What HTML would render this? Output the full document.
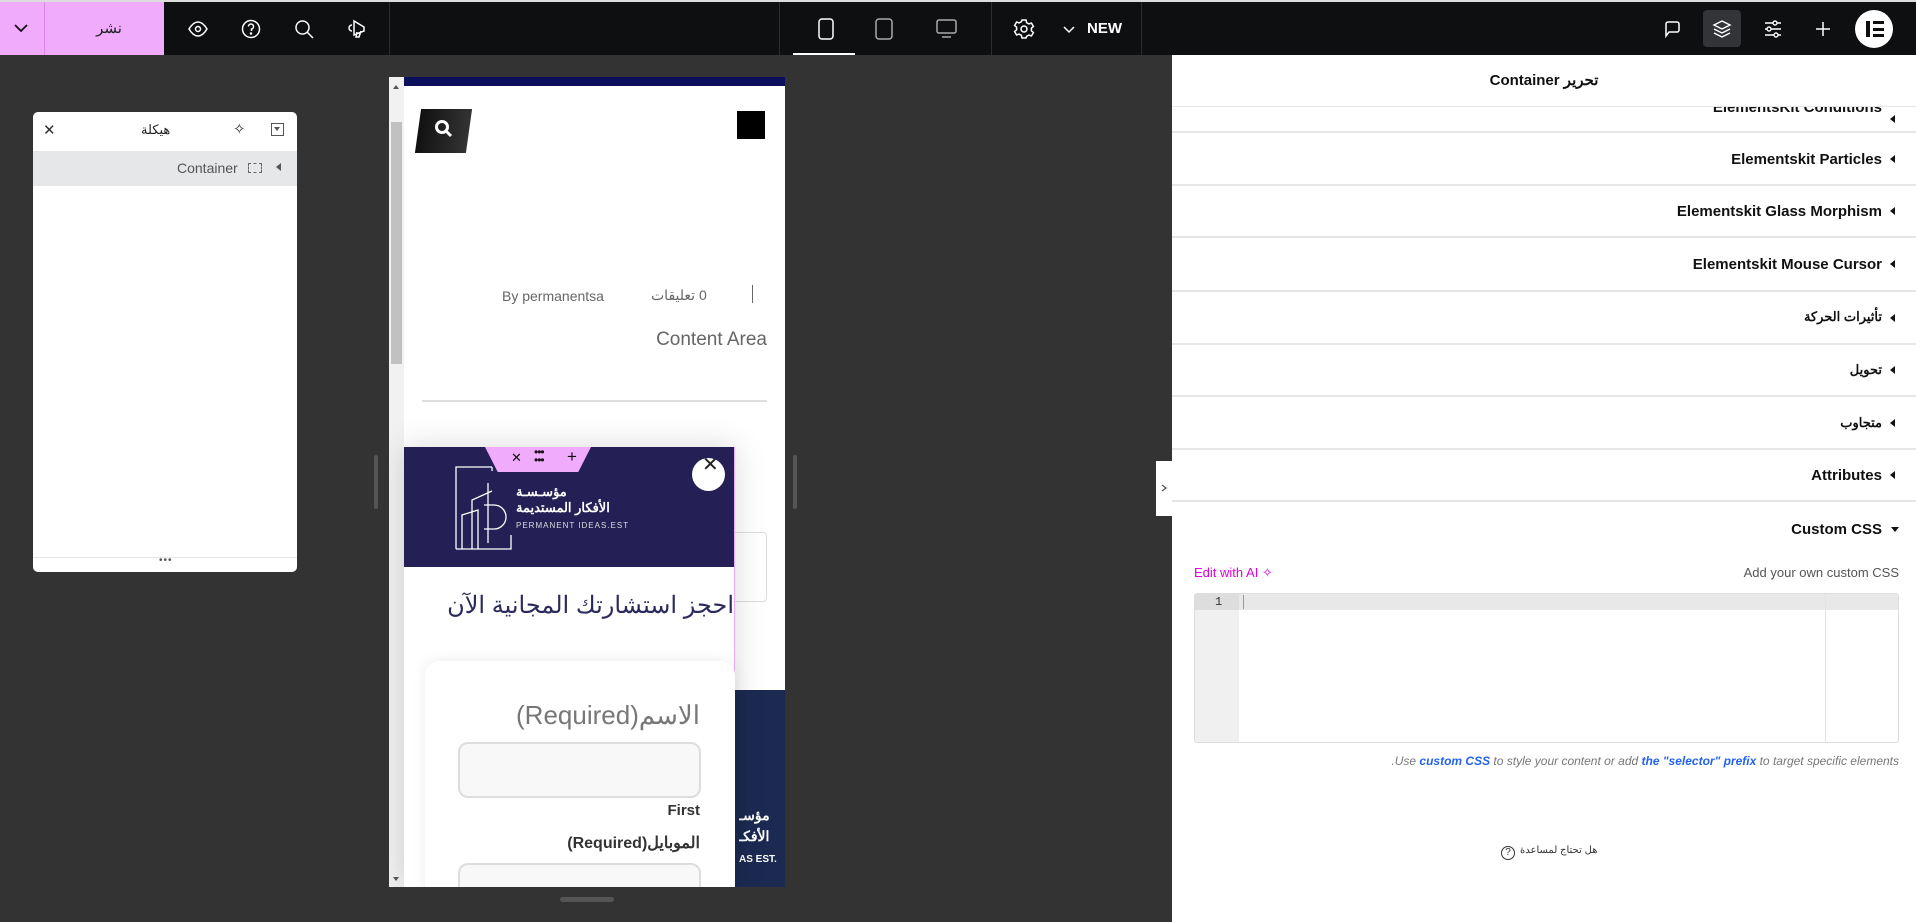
<!DOCTYPE html>
<html><head><meta charset="utf-8"><style>
*{box-sizing:border-box;margin:0;padding:0}
body{width:1916px;height:922px;overflow:hidden;background:#333;font-family:"Liberation Sans","Noto Sans CJK SC",sans-serif;position:relative}
.a{position:absolute}
.top{left:0;top:0;width:1916px;height:55px;background:#0e0f11;border-top:2px solid #ddd}
.sep{position:absolute;top:0;width:1px;height:53px;background:#2b2c30}
svg{display:block}
.row{position:absolute;left:1172px;width:744px;border-bottom:2px solid #e6e6e6;font-weight:bold;font-size:15px;color:#111;text-align:right;padding-right:34px}
.row:after{content:"";position:absolute;right:21px;top:50%;margin-top:-4px;border:4px solid transparent;border-right:5px solid #111;border-left:0}
</style></head><body>
<div class="a top">
 <div class="a" style="left:0;top:0;width:164px;height:53px;background:#f0abfc"></div>
 <div class="a" style="left:44px;top:0;width:1px;height:53px;background:#d88ae6"></div>
 <svg class="a" style="left:13px;top:20px" width="16" height="12"><path d="M2 3l6 6 6-6" stroke="#111" stroke-width="1.8" fill="none"/></svg>
 <div class="a" dir="rtl" style="left:84px;top:17px;width:50px;text-align:center;font-size:15px;color:#222">نشر</div>
 <svg class="a" style="left:187px;top:16px" width="22" height="22" fill="none" stroke="#fff" stroke-width="1.5"><path d="M2 11c3-5 6-7 9-7s6 2 9 7c-3 5-6 7-9 7s-6-2-9-7z"/><circle cx="11" cy="11" r="2.5"/></svg>
 <svg class="a" style="left:240px;top:16px" width="22" height="22" fill="none" stroke="#fff" stroke-width="1.5"><circle cx="11" cy="11" r="8.5"/><path d="M8.5 8.5a2.5 2.5 0 1 1 3 2.5v2"/><circle cx="11" cy="15.5" r=".5" fill="#fff"/></svg>
 <svg class="a" style="left:293px;top:16px" width="22" height="22" fill="none" stroke="#fff" stroke-width="1.5"><circle cx="9.5" cy="9.5" r="6.5"/><path d="M14 14l6 6"/></svg>
 <svg class="a" style="left:346px;top:16px" width="22" height="22" fill="none" stroke="#fff" stroke-width="1.5"><path d="M18 9L8 3v14l10-4zM18 9v4M15 13l-2 6h-3l1-5M6 7a3 3 0 0 0 0 6"/></svg>
 <div class="sep" style="left:389px"></div>
 <div class="sep" style="left:779px"></div>
 <svg class="a" style="left:816px;top:15px" width="20" height="24" fill="none" stroke="#fff" stroke-width="1.5"><rect x="3" y="2" width="14" height="20" rx="3"/></svg>
 <div class="a" style="left:793px;top:51px;width:62px;height:2px;background:#fff"></div>
 <svg class="a" style="left:874px;top:15px" width="22" height="24" fill="none" stroke="#aaa" stroke-width="1.5"><rect x="2" y="2" width="16" height="20" rx="3"/></svg>
 <svg class="a" style="left:935px;top:16px" width="24" height="22" fill="none" stroke="#aaa" stroke-width="1.5"><rect x="2" y="2" width="19" height="13" rx="2"/><path d="M7 19h9"/></svg>
 <div class="sep" style="left:991px"></div>
 <svg class="a" style="left:1013px;top:16px" width="22" height="22" fill="none" stroke="#fff" stroke-width="1.5"><circle cx="11" cy="11" r="3"/><path d="M9 2h4l.6 2.6 2.3 1.3 2.5-.9 2 3.5-2 1.7v2.6l2 1.7-2 3.5-2.5-.9-2.3 1.3L13 20H9l-.6-2.6-2.3-1.3-2.5.9-2-3.5 2-1.7V9.2l-2-1.7 2-3.5 2.5.9 2.3-1.3z"/></svg>
 <svg class="a" style="left:1062px;top:22px" width="14" height="10"><path d="M2 3l5 5 5-5" stroke="#fff" stroke-width="1.5" fill="none"/></svg>
 <div class="a" style="left:1087px;top:18px;font-weight:bold;font-size:15px;color:#fff">NEW</div>
 <div class="sep" style="left:1141px"></div>
 <svg class="a" style="left:1662px;top:17px" width="20" height="20" fill="none" stroke="#fff" stroke-width="1.5"><path d="M4 17V5a2 2 0 0 1 2-2h9a2 2 0 0 1 2 2v6a2 2 0 0 1-2 2H7z"/></svg>
 <div class="a" style="left:1703px;top:8px;width:38px;height:37px;border-radius:4px;background:#333438"></div>
 <svg class="a" style="left:1712px;top:17px" width="20" height="20" fill="none" stroke="#fff" stroke-width="1.4"><path d="M10 2l8 4-8 4-8-4zM2 10l8 4 8-4M2 14l8 4 8-4"/></svg>
 <svg class="a" style="left:1763px;top:17px" width="20" height="20" fill="none" stroke="#fff" stroke-width="1.4"><path d="M2 4h16M2 10h16M2 16h16"/><circle cx="12" cy="4" r="2" fill="#0e0f11"/><circle cx="6" cy="10" r="2" fill="#0e0f11"/><circle cx="13" cy="16" r="2" fill="#0e0f11"/></svg>
 <svg class="a" style="left:1813px;top:17px" width="20" height="20" stroke="#fff" stroke-width="1.5"><path d="M10 3v14M3 10h14"/></svg>
 <div class="a" style="left:1855px;top:8px;width:38px;height:38px;border-radius:50%;background:#fff"></div>
 <div class="a" style="left:1866px;top:19px;width:4px;height:16px;background:#0e0f11"></div>
 <div class="a" style="left:1873px;top:19px;width:11px;height:3px;background:#0e0f11"></div>
 <div class="a" style="left:1873px;top:25.5px;width:11px;height:3px;background:#0e0f11"></div>
 <div class="a" style="left:1873px;top:32px;width:11px;height:3px;background:#0e0f11"></div>
</div>

<!-- navigator -->
<div class="a" style="left:33px;top:112px;width:264px;height:460px;background:#fff;border-radius:5px;overflow:hidden">
 <div class="a" style="left:10px;top:9px;font-size:15px;color:#333">✕</div>
 <div class="a" dir="rtl" style="left:108px;top:10px;font-size:13px;color:#222">هيكلة</div>
 <div class="a" style="left:200px;top:8px;font-size:15px;color:#333">✧</div>
 <div class="a" style="left:238px;top:11px;width:13px;height:13px;border:1px solid #555"></div>
 <div class="a" style="left:241px;top:15px;border:3.5px solid transparent;border-top:4px solid #555"></div>
 <div class="a" style="left:0;top:39px;width:264px;height:35px;background:#e6e7e9"></div>
 <div class="a" style="left:144px;top:48px;font-size:14px;color:#555">Container</div>
 <div class="a" style="left:215px;top:51px;width:14px;height:10px;border:1px dashed #666"></div>
 <div class="a" style="left:243px;top:51px;border:4px solid transparent;border-right:5px solid #555;border-left:0"></div>
 <div class="a" style="left:0;top:445px;width:264px;height:1px;background:#e6e6e6"></div>
 <div class="a" style="left:126px;top:443px;font-size:10px;color:#555;letter-spacing:1px">•••</div>
</div>

<!-- preview -->
<div class="a" style="left:389px;top:77px;width:396px;height:810px;background:#fff;overflow:hidden">
 <div class="a" style="left:0;top:0;width:15px;height:810px;background:#f1f1f1"></div>
 <div class="a" style="left:2px;top:45px;width:11px;height:242px;background:#c1c1c1"></div>
 <div class="a" style="left:4px;top:5px;border:3px solid transparent;border-bottom:4px solid #555"></div>
 <div class="a" style="left:4px;top:800px;border:3px solid transparent;border-top:4px solid #555"></div>
 <div class="a" style="left:15px;top:0;width:381px;height:9px;background:#0b0f5c"></div>
 <div class="a" style="left:29px;top:32px;width:51px;height:44px;background:linear-gradient(90deg,#111,#333);transform:skewX(-8deg)"></div>
 <svg class="a" style="left:44px;top:41px" width="22" height="22" fill="none" stroke="#fff" stroke-width="3"><circle cx="9" cy="9" r="5.5"/><path d="M13 13l5 5"/></svg>
 <div class="a" style="left:348px;top:34px;width:28px;height:28px;background:#000"></div>
 <div class="a" style="left:113px;top:211px;font-size:14px;color:#666">By permanentsa</div>
 <div class="a" dir="rtl" style="left:262px;top:210px;font-size:14px;color:#666">0 تعليقات</div>
 <div class="a" style="left:363px;top:208px;width:1px;height:18px;background:#666"></div>
 <div class="a" style="right:18px;top:252px;font-size:19px;color:#666">Content Area</div>
 <div class="a" style="left:33px;top:323px;width:345px;height:2px;background:#ddd"></div>
 <div class="a" style="left:330px;top:455px;width:48px;height:70px;border:1px solid #ddd;border-radius:4px"></div>
 <div class="a" style="left:346px;top:613px;width:50px;height:197px;background:#1c2a52"></div>
 <div class="a" dir="rtl" style="left:350px;top:728px;width:44px;text-align:left;font-size:14px;font-weight:bold;color:#fff;line-height:21px;white-space:nowrap;overflow:hidden">مؤسـ<br>الأفكـ<br><span style="font-size:10px" dir="ltr">AS EST.</span></div>
 <!-- popup -->
 <div class="a" style="left:15px;top:370px;width:331px;height:440px;background:#fff;border-right:1px solid #f0abfc;box-shadow:0 0 30px rgba(0,0,0,.15)">
  <div class="a" style="left:0;top:0;width:330px;height:120px;background:#241f55"></div>
  <svg class="a" style="left:50px;top:18px" width="60" height="85" fill="none" stroke="#fff" stroke-width="1.3"><path d="M2 84V2h36M2 84h55v-14M34 18v60M38 2v4M18 84V35l20-9M8 84V50l16-5v39M30 40h10a12 12 0 0 1 0 24H30"/></svg>
  <div class="a" dir="rtl" style="left:112px;top:37px;width:100px;font-size:13px;font-weight:bold;color:#fff;text-align:left;line-height:16px;white-space:nowrap">مؤسـسـة<br>الأفكار المستديمة</div>
  <div class="a" style="left:112px;top:74px;font-size:8px;color:#ddd;letter-spacing:1px">PERMANENT IDEAS.EST</div>
  <div class="a" style="left:81px;top:0;width:106px;height:25px;background:#f0abfc;clip-path:polygon(0 0,100% 0,88% 100%,12% 100%)"></div>
  <div class="a" style="left:107px;top:3px;font-size:13px;color:#111">✕</div>
  <div class="a" style="left:130px;top:1px;font-size:12px;color:#111;letter-spacing:-1px;line-height:8px">•••<br>•••</div>
  <div class="a" style="left:163px;top:0;font-size:17px;color:#111">+</div>
  <div class="a" style="left:288px;top:11px;width:33px;height:33px;border-radius:50%;background:#fff"></div>
  <div class="a" style="left:298px;top:5px;font-size:20px;color:#222">✕</div>
  <div class="a" dir="rtl" style="right:0;top:144px;font-size:24px;color:#2b2a5c;white-space:nowrap">احجز استشارتك المجانية الآن</div>
  <div class="a" style="left:21px;top:214px;width:310px;height:240px;background:#fff;border-radius:14px;box-shadow:0 0 14px rgba(0,0,0,.08)"></div>
  <div class="a" dir="rtl" style="right:34px;top:253px;font-size:26px;color:#777">الاسم(Required)</div>
  <div class="a" style="left:54px;top:295px;width:243px;height:56px;background:#f8f8f8;border:2px solid #ddd;border-radius:10px"></div>
  <div class="a" style="right:34px;top:355px;font-size:15px;font-weight:bold;color:#333">First</div>
  <div class="a" dir="rtl" style="right:34px;top:386px;font-size:16px;font-weight:bold;color:#333">الموبايل(Required)</div>
  <div class="a" style="left:54px;top:416px;width:243px;height:56px;background:#f8f8f8;border:2px solid #ddd;border-radius:10px"></div>
 </div>
</div>
<div class="a" style="left:560px;top:897px;width:54px;height:5px;border-radius:3px;background:#555"></div>
<div class="a" style="left:374px;top:455px;width:4px;height:54px;border-radius:2px;background:#555"></div>
<div class="a" style="left:793px;top:455px;width:4px;height:54px;border-radius:2px;background:#555"></div>

<!-- right panel -->
<div class="a" style="left:1172px;top:55px;width:744px;height:867px;background:#fff"></div>
<div class="a" style="left:1156px;top:461px;width:16px;height:55px;background:#fff"></div>
<svg class="a" style="left:1159px;top:483px" width="10" height="10"><path d="M3 2l4 3-4 3" stroke="#555" stroke-width="1.3" fill="none"/></svg>
<div class="a" dir="rtl" style="left:1172px;top:71px;width:744px;text-align:center;font-size:15px;font-weight:bold;color:#111">تحرير Container</div>
<div class="a" style="left:1172px;top:106px;width:744px;height:1px;background:#e6e6e6"></div>
<div class="row" style="top:107px;height:26px;overflow:hidden"><span style="position:relative;top:-8px">ElementsKit Conditions</span></div>
<div class="row" style="top:133px;height:53px;line-height:53px">Elementskit Particles</div>
<div class="row" style="top:186px;height:52px;line-height:52px">Elementskit Glass Morphism</div>
<div class="row" style="top:238px;height:54px;line-height:54px">Elementskit Mouse Cursor</div>
<div class="row" dir="rtl" style="top:292px;height:53px;line-height:50px;font-size:13px;text-align:right">تأثيرات الحركة</div>
<div class="row" dir="rtl" style="top:345px;height:52px;line-height:50px;font-size:13px">تحويل</div>
<div class="row" dir="rtl" style="top:397px;height:53px;line-height:51px;font-size:13px">متجاوب</div>
<div class="row" style="top:450px;height:52px;line-height:52px">Attributes</div>
<div class="a" style="right:34px;top:521px;font-weight:bold;font-size:15px;color:#111">Custom CSS</div>
<div class="a" style="left:1891px;top:527px;border:4px solid transparent;border-top:5px solid #111;border-bottom:0"></div>
<div class="a" style="left:1194px;top:565px;font-size:13px;color:#e000e0">Edit with AI ✧</div>
<div class="a" style="right:17px;top:565px;font-size:13px;color:#555">Add your own custom CSS</div>
<div class="a" style="left:1194px;top:593px;width:705px;height:150px;border:1px solid #ddd;border-radius:3px;overflow:hidden">
 <div class="a" style="left:0;top:0;width:44px;height:150px;background:#f0f0f0"></div>
 <div class="a" style="left:0;top:0;width:705px;height:16px;background:#e8e8e8"></div>
 <div class="a" style="left:0;top:0;width:44px;height:16px;background:#ddd"></div>
 <div class="a" style="left:20px;top:1px;font-size:12px;color:#333;font-family:'Liberation Mono',monospace">1</div>
 <div class="a" style="left:48px;top:1px;width:1px;height:14px;background:#999"></div>
 <div class="a" style="left:630px;top:0;width:1px;height:150px;background:#e3e3e3"></div>
</div>
<div class="a" style="right:17px;top:754px;font-size:12px;font-style:italic;color:#777">.Use <b style="color:#2563eb">custom CSS</b> to style your content or add <b style="color:#2563eb">the "selector" prefix</b> to target specific elements</div>
<div class="a" style="left:1501px;top:846px;width:14px;height:14px;border:1.5px solid #333;border-radius:50%;font-size:10px;text-align:center;line-height:11px;color:#333">?</div>
<div class="a" dir="rtl" style="left:1520px;top:845px;font-size:10px;color:#333">هل تحتاج لمساعدة</div>
</body></html>
